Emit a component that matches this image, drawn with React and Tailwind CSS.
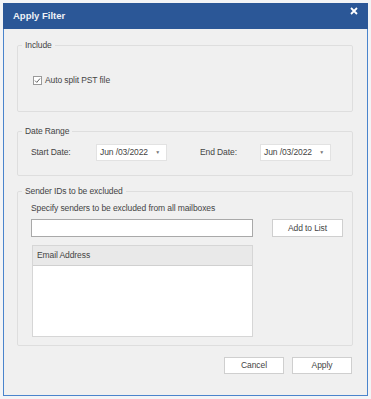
import React from "react";

const font = { fontFamily: '"Liberation Sans", Arial, sans-serif' };

function DatePicker() {
  return (
    <div className="flex h-[17px] w-[71px] items-center justify-between border border-[#e2e2e2] bg-white pl-[3px] pr-[6px] text-[8.5px] text-[#444]">
      <span>Jun /03/2022</span>
      <span className="text-[5px] text-[#777]">▼</span>
    </div>
  );
}

export default function App() {
  return (
    <div className="h-[399px] w-[371px] overflow-hidden bg-[#f3f4f6] pl-[3px] pt-[3px]" style={font}>
      <div className="flex h-[393px] w-[365px] flex-col border-x border-b border-[#4a84cc] bg-[#f0f0f0]">
        <div className="-mx-px flex h-[26px] items-center justify-between bg-[#2b5797] pl-[10px] pr-[10px]">
          <span className="text-[9.5px] font-bold text-[#eef1f6]">Apply Filter</span>
          <svg width="8" height="8" viewBox="0 0 8 8" className="-mt-[10px]">
            <path d="M1 1 L7 7 M7 1 L1 7" stroke="#fff" strokeWidth="1.8" />
          </svg>
        </div>

        <div className="flex flex-col pl-[13px] pr-[14px] text-[8.5px] tracking-[-0.1px] text-[#444]">
          <fieldset className="mt-[10px] h-[73px] rounded-[2px] border border-[#dedede]">
            <legend className="ml-[4px] px-[3px] leading-[12px]">Include</legend>
            <label className="ml-[15px] mt-[23px] flex items-center gap-[3px]">
              <span className="flex h-[9px] w-[9px] items-center justify-center border border-[#9a9a9a] bg-white">
                <svg width="7" height="7" viewBox="0 0 7 7">
                  <path d="M1 3.6 L2.8 5.4 L6 1.5" stroke="#555" strokeWidth="0.9" fill="none" />
                </svg>
              </span>
              <span>Auto split PST file</span>
            </label>
          </fieldset>

          <fieldset className="mt-[13px] h-[51px] rounded-[2px] border border-[#dedede]">
            <legend className="ml-[4px] px-[3px] leading-[12px]">Date Range</legend>
            <div className="ml-[13px] mt-[7px] flex items-center">
              <span className="w-[65px]">Start Date:</span>
              <DatePicker />
              <span className="ml-[33px] w-[60px]">End Date:</span>
              <DatePicker />
            </div>
          </fieldset>

          <fieldset className="mt-[9px] h-[161px] rounded-[2px] border border-[#dedede]">
            <legend className="ml-[4px] px-[3px] leading-[12px]">Sender IDs to be excluded</legend>
            <div className="ml-[13px] mt-[5px] leading-[12px]">Specify senders to be excluded from all mailboxes</div>
            <div className="ml-[13px] mt-[5px] flex items-center">
              <div className="h-[18px] w-[222px] border border-[#a9a9a9] bg-white" />
              <button className="ml-[19px] h-[18px] w-[71px] border border-[#cfcfcf] bg-white text-[8.5px] text-[#444]">
                Add to List
              </button>
            </div>
            <div className="ml-[14px] mt-[8px] flex h-[92px] w-[221px] flex-col border border-[#d6d6d6] bg-white">
              <div className="flex h-[20px] items-center border-b border-[#d0d0d0] bg-[#e9e9e9] pl-[4px]">
                Email Address
              </div>
            </div>
          </fieldset>

          <div className="mt-[11px] flex justify-end gap-[8px] pr-px">
            <button className="h-[17px] w-[60px] border border-[#cfcfcf] bg-white text-[8.5px] text-[#444]">Cancel</button>
            <button className="h-[17px] w-[60px] border border-[#cfcfcf] bg-white text-[8.5px] text-[#444]">Apply</button>
          </div>
        </div>
      </div>
    </div>
  );
}
